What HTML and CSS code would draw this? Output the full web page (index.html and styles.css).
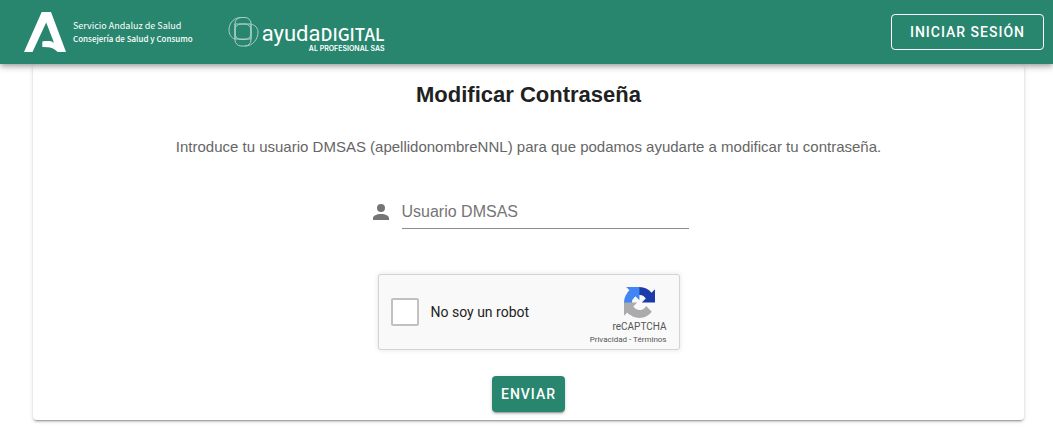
FILE: index.html
```html
<!DOCTYPE html>
<html lang="es">
<head>
  <meta charset="UTF-8">
  <meta name="viewport" content="width=device-width, initial-scale=1.0">
  <title>Modificar Contraseña</title>
  <link rel="stylesheet" href="styles.css">
</head>
<body>
  <header class="toolbar">
    <a class="brand" href="#">
      <svg class="brand-logo" viewBox="0 0 42 40" aria-hidden="true">
        <path fill="#fff" d="M17.700 0H27l15 40h-8.300C31 37.300 28 35.400 24.500 35.200L18.300 35V29.400C23 29 27 28.500 30 30.800L22.200 10.500 8.500 40H0z"/>
      </svg>
      <span class="brand-text">
        <span class="brand-name">Servicio Andaluz de Salud</span>
        <span class="brand-dept">Consejería de Salud y Consumo</span>
      </span>
    </a>
    <a class="product" href="#">
      <svg class="product-logo" viewBox="0 0 32 32" fill="none" stroke="#a9cfc5" aria-hidden="true">
        <rect x="7" y="1.500" width="16" height="22" rx="6"/>
        <rect x="7" y="8" width="16" height="22" rx="6"/>
        <path d="M7 23C3 22 1 18 1 14 1 7 6 1.500 13 1.500M23 8c4 1 7 4 7 8 0 7-5 14-13 14M7 23h16V8H7z"/>
      </svg>
      <span class="product-text">
        <span class="product-name">ayuda<b>DIGITAL</b></span>
        <span class="product-sub">AL PROFESIONAL SAS</span>
      </span>
    </a>
    <button class="btn btn-outlined" type="button">INICIAR SESIÓN</button>
  </header>

  <main class="content">
    <form class="card">
      <h1 class="title">Modificar Contraseña</h1>
      <p class="intro">Introduce tu usuario DMSAS (apellidonombreNNL) para que podamos ayudarte a modificar tu contraseña.</p>

      <div class="field">
        <label for="usuario">
          <svg class="field-icon" viewBox="0 0 24 24" role="img" aria-label="Usuario">
            <path fill="#757575" d="M12 4a4 4 0 0 1 4 4 4 4 0 0 1-4 4 4 4 0 0 1-4-4 4 4 0 0 1 4-4m0 10c4.420 0 8 1.790 8 4v2H4v-2c0-2.210 3.580-4 8-4z"/>
          </svg>
        </label>
        <input id="usuario" type="text" placeholder="Usuario DMSAS">
      </div>

      <div class="captcha">
        <input id="robot" type="checkbox">
        <label for="robot">No soy un robot</label>
        <div class="captcha-brand">
          <svg class="captcha-logo" viewBox="0 0 64 64" aria-hidden="true">
            <path fill="#1c3aa9" d="M64 31.955l-.033-1.370V4.687l-7.160 7.160C50.948 4.674 42.033.093 32.050.093c-10.400 0-19.622 4.960-25.458 12.640l11.736 11.860a15.550 15.550 0 0 1 4.754-5.334c2.050-1.600 4.952-2.906 8.968-2.906.485 0 .860.057 1.135.163 4.976.393 9.288 3.140 11.828 7.124l-8.307 8.307L64 31.953"/>
            <path fill="#4285f4" d="M31.862.094l-1.370.033H4.594l7.160 7.160C4.580 13.147 0 22.060 0 32.046c0 10.400 4.960 19.622 12.640 25.458L24.500 45.768a15.550 15.550 0 0 1-5.334-4.754c-1.600-2.050-2.906-4.952-2.906-8.968 0-.485.057-.860.163-1.135.393-4.976 3.140-9.288 7.124-11.828l8.307 8.307L31.860.095"/>
            <path fill="#ababab" d="M.001 32.045l.033 1.370v25.898l7.160-7.160c5.860 7.173 14.774 11.754 24.760 11.754 10.400 0 19.622-4.960 25.458-12.640l-11.736-11.860a15.550 15.550 0 0 1-4.754 5.334c-2.050 1.600-4.952 2.906-8.968 2.906-.485 0-.860-.057-1.135-.163-4.976-.393-9.288-3.140-11.828-7.124l8.307-8.307c-10.522.040-22.400.066-27.295-.005"/>
          </svg>
          <span class="captcha-name">reCAPTCHA</span>
          <span class="captcha-links"><a href="#">Privacidad</a> - <a href="#">Términos</a></span>
        </div>
      </div>

      <button class="btn btn-primary" type="submit">ENVIAR</button>
    </form>
  </main>
</body>
</html>
```
FILE: styles.css
```css
* {
  box-sizing: border-box;
}
body {
  margin: 0;
  background: #fff;
  font-family: "Liberation Sans", Arial, sans-serif;
  font-size: 16px;
}
a {
  color: inherit;
  text-decoration: none;
}

/* Toolbar */
.toolbar {
  position: relative;
  display: flex;
  align-items: center;
  height: 64px;
  padding: 0 9px 0 24px;
  background: #28866e;
  color: #fff;
  box-shadow: 0 2px 4px -1px rgba(0, 0, 0, 0.2), 0 4px 5px rgba(0, 0, 0, 0.14), 0 1px 10px rgba(0, 0, 0, 0.12);
}
.brand {
  display: flex;
  align-items: center;
  gap: 7px;
}
.brand-logo {
  width: 42px;
  height: 40px;
}
.brand-text {
  display: flex;
  flex-direction: column;
  font-family: "Noto Sans CJK JP", sans-serif;
  line-height: 13px;
}
.brand-name {
  font-size: 9px;
}
.brand-dept {
  font-size: 8px;
  font-weight: 500;
}
.product {
  display: flex;
  align-items: center;
  gap: 2px;
  margin-left: 35px;
}
.product-logo {
  width: 32px;
  height: 32px;
}
.product-text {
  display: flex;
  flex-direction: column;
  align-items: flex-end;
  padding-top: 12px;
}
.product-name {
  font-family: Roboto, sans-serif;
  font-size: 22px;
  line-height: 22px;
}
.product-name b {
  font-family: "Noto Sans CJK JP", sans-serif;
  font-size: 17px;
  font-weight: 500;
  line-height: 1;
}
.product-sub {
  font-family: Inter, sans-serif;
  font-size: 7px;
  font-weight: 600;
  line-height: 8px;
}

/* Buttons */
.btn {
  height: 36px;
  border: 0;
  border-radius: 4px;
  color: #fff;
  font-family: Roboto, sans-serif;
  font-size: 14px;
  font-weight: 500;
  letter-spacing: 1px;
  cursor: pointer;
}
.btn-outlined {
  margin-left: auto;
  padding: 0 18px;
  border: 1px solid #fff;
  background: transparent;
}
.btn-primary {
  margin-top: 26px;
  padding: 0 9px;
  background: #28866e;
  box-shadow: 0 3px 1px -2px rgba(0, 0, 0, 0.2), 0 2px 2px rgba(0, 0, 0, 0.14), 0 1px 5px rgba(0, 0, 0, 0.12);
}

/* Form card */
.content {
  padding: 0 29px 12px 33px;
}
.card {
  display: flex;
  flex-direction: column;
  align-items: center;
  padding: 15px 16px 8px;
  border-radius: 4px;
  box-shadow: 0 3px 1px -2px rgba(0, 0, 0, 0.2), 0 2px 2px rgba(0, 0, 0, 0.14), 0 1px 5px rgba(0, 0, 0, 0.12);
}
.title {
  margin: 0;
  color: #212121;
  font-size: 22px;
  line-height: 32px;
}
.intro {
  margin: 24px 0 0;
  color: #666;
  font-size: 15px;
  line-height: 24px;
}
.field {
  display: flex;
  align-items: center;
  gap: 9px;
  width: 320px;
  margin-top: 36px;
}
.field-icon {
  display: block;
  width: 24px;
  height: 24px;
}
.field input {
  flex: 1;
  min-width: 0;
  height: 34px;
  padding: 0;
  border: 0;
  border-bottom: 1px solid #8c8c8c;
  background: transparent;
  font: inherit;
}
.field input::placeholder {
  color: #757575;
}

/* Captcha */
.captcha {
  display: flex;
  align-items: center;
  width: 302px;
  height: 76px;
  margin-top: 45px;
  padding: 0 12px;
  border: 1px solid #d3d3d3;
  border-radius: 3px;
  background: #f9f9f9;
  box-shadow: 0 0 4px 1px rgba(0, 0, 0, 0.08);
  font-family: Roboto, sans-serif;
}
.captcha input {
  appearance: none;
  width: 28px;
  height: 28px;
  margin: 0 12px 0 0;
  border: 2px solid #c1c1c1;
  border-radius: 2px;
  background: #fff;
}
.captcha label {
  color: #222;
  font-size: 14px;
}
.captcha-brand {
  display: flex;
  flex-direction: column;
  align-items: flex-end;
  margin-left: auto;
  padding-top: 6px;
  color: #555;
}
.captcha-logo {
  width: 31px;
  height: 31px;
  margin-right: 12px;
}
.captcha-name {
  font-size: 10px;
  line-height: 18px;
}
.captcha-links {
  font-size: 8px;
  line-height: 8px;
}
```
